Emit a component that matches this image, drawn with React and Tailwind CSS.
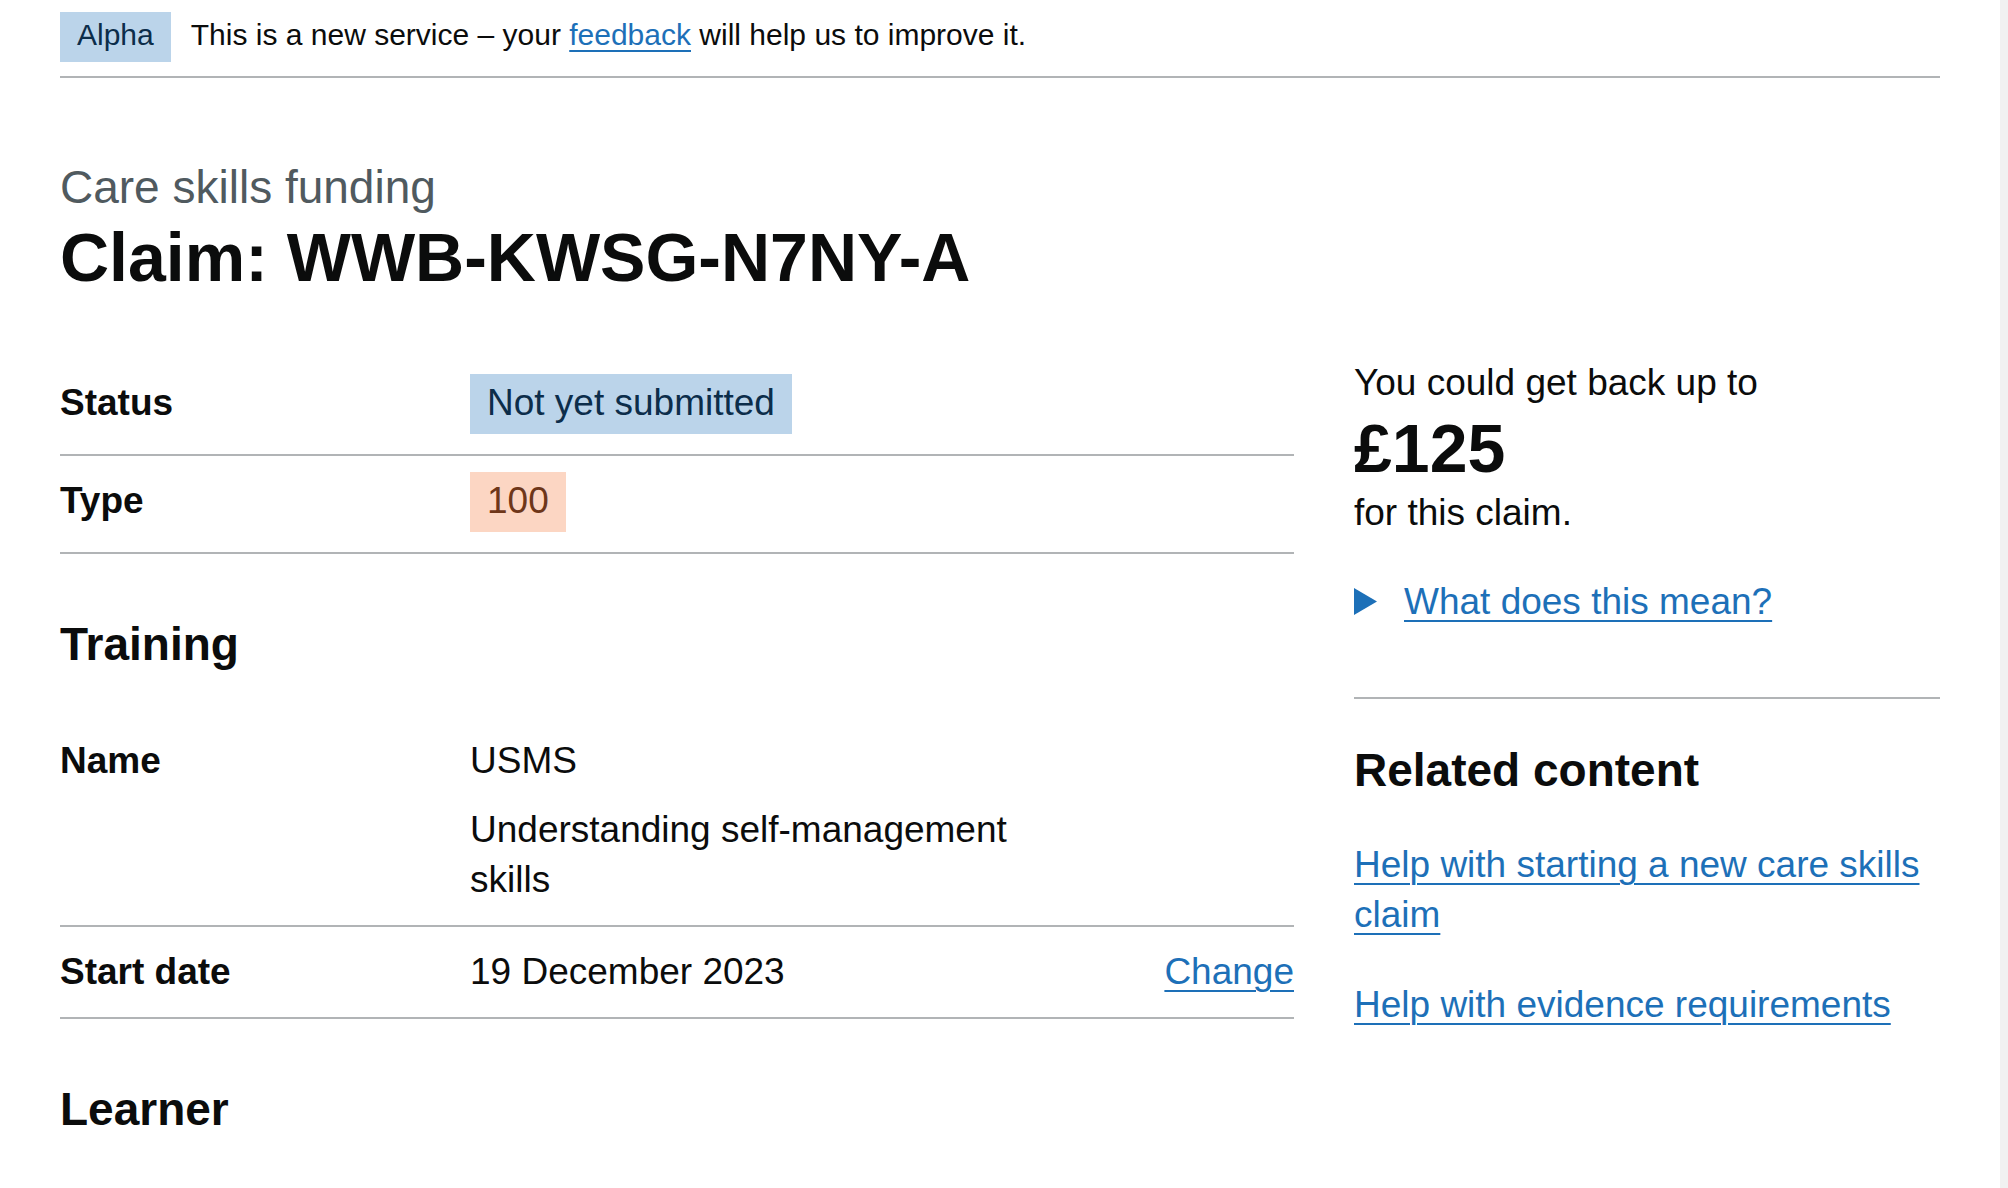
const linkCls =
  'text-[#1d70b8] underline decoration-2 underline-offset-[6px]'

function Tag({ children, tone = 'blue' }) {
  const tones = {
    blue: 'bg-[#bbd4ea] text-[#0c2d4a]',
    orange: 'bg-[#fcd6c3] text-[#6e3619]',
  }
  return (
    <strong className={`inline-block pt-[4px] pb-[6px] px-[17px] font-normal leading-[50px] ${tones[tone]}`}>
      {children}
    </strong>
  )
}

function PhaseBanner() {
  return (
    <div className="flex items-start pt-[12px] pb-[14px] border-b-2 border-[#b1b4b6] text-[30px]">
      <strong className="inline-block px-[17px] pb-[4px] leading-[46px] font-normal bg-[#bbd4ea] text-[#0c2d4a]">
        Alpha
      </strong>
      <p className="ml-[20px] leading-[46px]">
        This is a new service – your{' '}
        <a href="#" className="text-[#1d70b8] underline decoration-2 underline-offset-[5px]">
          feedback
        </a>{' '}
        will help us to improve it.
      </p>
    </div>
  )
}

function Row({ label, children, action, tag = false }) {
  return (
    <div
      className={`flex items-baseline border-b-2 border-[#b1b4b6] pb-[20px] text-[37px] leading-[50px] ${
        tag ? 'pt-[16px]' : 'pt-[20px]'
      }`}
    >
      <dt className="w-[410px] shrink-0 font-bold">{label}</dt>
      <dd className="w-[600px] shrink-0">{children}</dd>
      <dd className="flex-1 text-right">
        {action && (
          <a href="#" className={linkCls}>
            {action}
          </a>
        )}
      </dd>
    </div>
  )
}

function SectionHeading({ children }) {
  return <h2 className="mt-[60px] text-[46px] leading-[60px] font-bold">{children}</h2>
}

function Sidebar() {
  return (
    <aside className="w-[586px] shrink-0 text-[37px] leading-[50px]">
      <p>You could get back up to</p>
      <p className="text-[68px] leading-[80px] font-bold">£125</p>
      <p>for this claim.</p>

      <div className="mt-[39px] flex items-start">
        <svg width="23" height="27" viewBox="0 0 23 27" className="mt-[11px] shrink-0">
          <polygon points="0,0 23,13.5 0,27" fill="#1d70b8" />
        </svg>
        <a href="#" className={`ml-[27px] ${linkCls}`}>
          What does this mean?
        </a>
      </div>

      <hr className="mt-[70px] border-0 border-t-2 border-[#b1b4b6]" />

      <h2 className="mt-[41px] text-[46px] leading-[60px] font-bold">Related content</h2>
      <ul className="mt-[40px] space-y-[40px]">
        <li>
          <a href="#" className={linkCls}>
            Help with starting a new care skills claim
          </a>
        </li>
        <li>
          <a href="#" className={linkCls}>
            Help with evidence requirements
          </a>
        </li>
      </ul>
    </aside>
  )
}

export default function App() {
  return (
    <div className="flex h-[1188px] overflow-hidden bg-white font-['Liberation_Sans',Arial,sans-serif] text-[#0b0c0c]">
      <div className="flex-1 px-[60px]">
        <PhaseBanner />

        <main>
          <span className="mt-[84px] block text-[46px] leading-[50px] text-[#505a5f]">
            Care skills funding
          </span>
          <h1 className="mt-[5px] text-[68px] leading-[80px] font-bold">Claim: WWB-KWSG-N7NY-A</h1>

          <div className="mt-[61px] flex gap-[60px]">
            <div className="w-[1234px] shrink-0">
              <dl>
                <Row label="Status" tag>
                  <Tag>Not yet submitted</Tag>
                </Row>
                <Row label="Type" tag>
                  <Tag tone="orange">100</Tag>
                </Row>
              </dl>

              <SectionHeading>Training</SectionHeading>
              <dl className="mt-[42px]">
                <Row label="Name">
                  <p className="mb-[19px]">USMS</p>
                  <p>Understanding self-management skills</p>
                </Row>
                <Row label="Start date" action="Change">
                  19 December 2023
                </Row>
              </dl>

              <SectionHeading>Learner</SectionHeading>
            </div>

            <Sidebar />
          </div>
        </main>
      </div>
      <div className="w-[8px] shrink-0 bg-[#f1f1f1]" />
    </div>
  )
}
